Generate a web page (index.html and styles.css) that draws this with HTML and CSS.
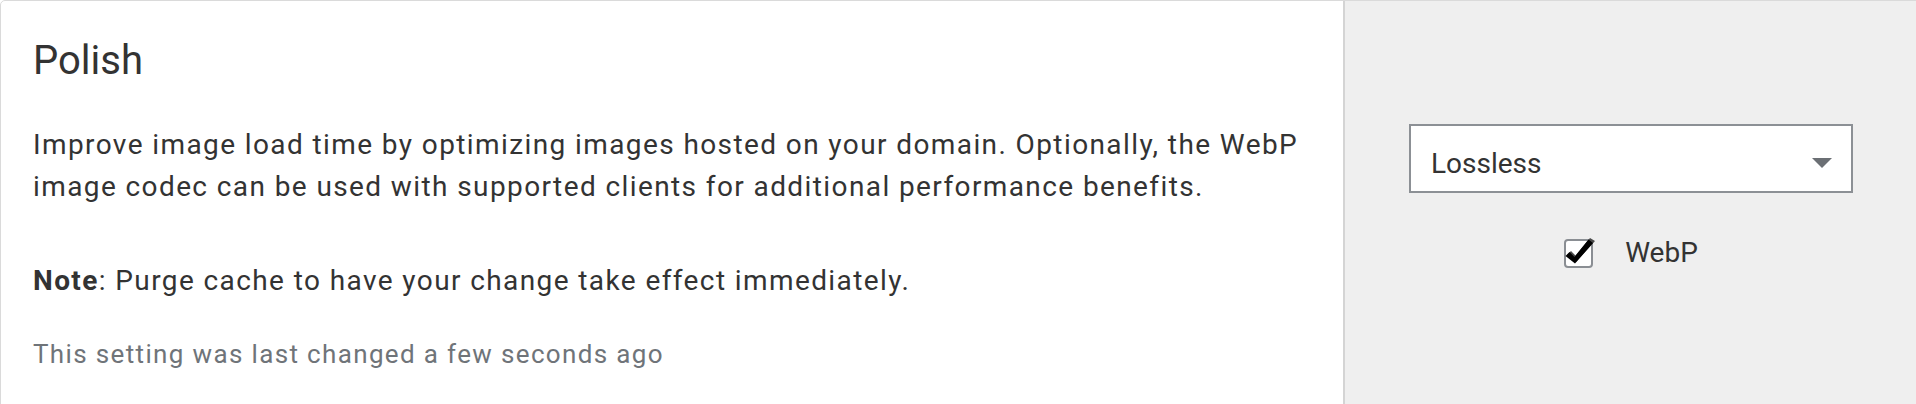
FILE: index.html
```
<!DOCTYPE html>
<html>
<head>
    <title>Polish</title>
    <link rel="stylesheet" href="styles.css">
</head>
<body>
    <div class="setting-card">
        <div class="setting-main">
            <h1 class="setting-title">Polish</h1>
            <p class="setting-desc">Improve image load time by optimizing images hosted on your domain. Optionally, the WebP image codec can be used with supported clients for additional performance benefits.</p>
            <p class="setting-note"><strong>Note</strong>: Purge cache to have your change take effect immediately.</p>
            <p class="setting-meta">This setting was last changed a few seconds ago</p>
        </div>

        <div class="setting-side">
            <div class="select-box">
                <span class="select-value">Lossless</span>
                <svg class="select-arrow" width="20" height="10" viewBox="0 0 20 10">
                    <polygon points="0,0 20,0 10,10" fill="#6b6f74"/>
                </svg>
            </div>

            <label class="check-row">
                <svg class="check-box" width="34" height="34" viewBox="0 0 34 34">
                    <rect x="1" y="5" width="27" height="27" rx="3" fill="#fff" stroke="#8a8e93" stroke-width="2"/>
                    <path d="M3 20 L7 16 L11.5 20.5 L26 3 L31 6 L12 27 Z" fill="#4a4a4a"/>
                    <path d="M1.5 21 L5.5 17 L10.5 22 L24.5 4.5 L29 8 L11 28.5 Z" fill="#000"/>
                </svg>
                <span class="check-label">WebP</span>
            </label>
        </div>
    </div>
</body>
</html>
```

FILE: styles.css
```
body {
    margin: 0;
    overflow: hidden;
    background-color: #ffffff;
    font-family: 'Roboto', 'Noto Sans', sans-serif;
    color: #333333;
}

.setting-card {
    display: flex;
    width: 1940px;
    min-height: 440px;
    border: 1px solid #dadada;
    border-radius: 5px;
    box-sizing: border-box;
}

.setting-main {
    width: 1342px;
    padding: 36px 32px 0 32px;
    box-sizing: border-box;
}

.setting-title {
    margin: 0;
    font-size: 40px;
    font-weight: 400;
    line-height: 48px;
}

.setting-desc,
.setting-note {
    font-size: 28px;
    line-height: 42px;
    letter-spacing: 1.4px;
}

.setting-desc {
    margin: 39px 0 0 0;
}

.setting-note {
    margin: 52px 0 0 0;
}

.setting-note strong {
    font-weight: 700;
}

.setting-meta {
    margin: 33px 0 0 0;
    font-size: 26px;
    line-height: 39px;
    letter-spacing: 1.35px;
    color: #6f7479;
}

.setting-side {
    flex: 1;
    border-left: 2px solid #d4d4d4;
    background-color: #efefef;
    padding: 123px 64px 0 64px;
}

.select-box {
    display: flex;
    align-items: center;
    justify-content: space-between;
    width: 444px;
    height: 69px;
    box-sizing: border-box;
    border: 2px solid #8c9095;
    background-color: #ffffff;
    padding: 9px 19px 0 20px;
}

.select-value {
    font-size: 28px;
    color: #333333;
}

.check-row {
    display: flex;
    align-items: center;
    width: 444px;
    justify-content: center;
    margin-top: 42px;
    gap: 27px;
}

.check-label {
    font-size: 28px;
    color: #333333;
}
```
